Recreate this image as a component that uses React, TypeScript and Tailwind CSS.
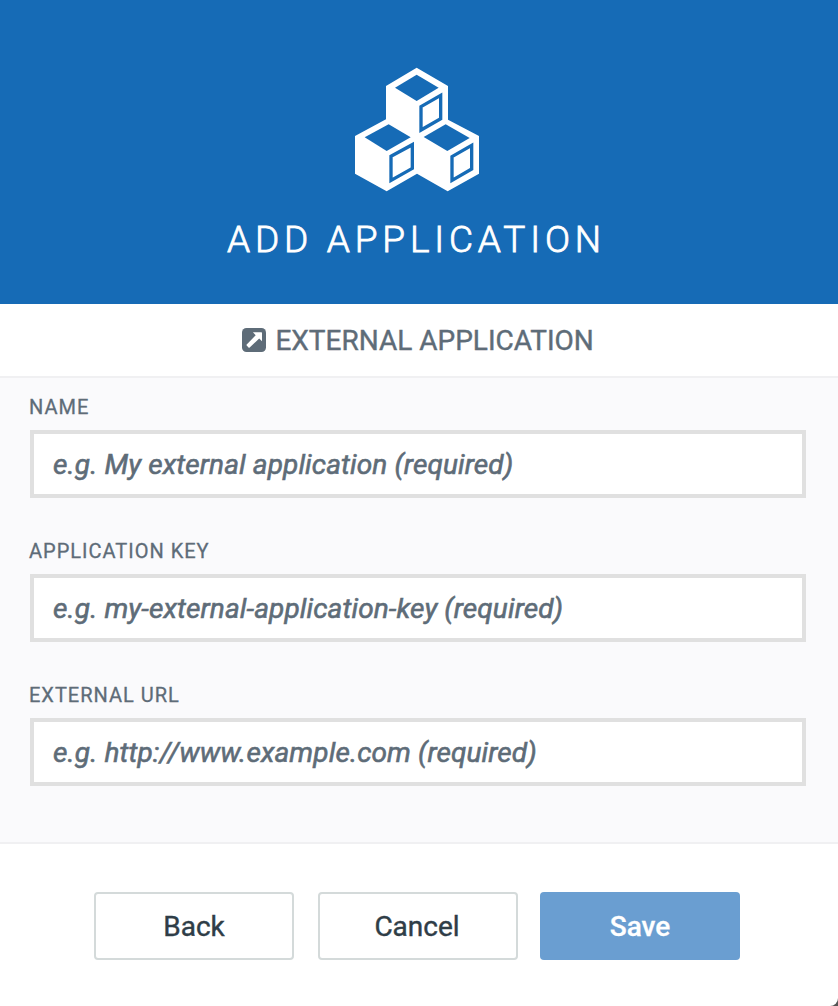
const fields = [
  { id: 'name', label: 'NAME', hint: 'e.g. My external application (required)' },
  { id: 'key', label: 'APPLICATION KEY', hint: 'e.g. my-external-application-key (required)' },
  { id: 'url', label: 'EXTERNAL URL', hint: 'e.g. http://www.example.com (required)' },
];

function CubesIcon() {
  return (
    <svg className="h-[150px] w-[150px] shrink-0" viewBox="0 0 450 450" aria-hidden="true">
      <path
        fill="#fff"
        d="M230 38L324 93V194L417 243V356L323 409L231 356L140 409L45 356V243L138 193V93Z"
      />
      <g fill="#166bb6">
        <path d="M230 59L296 98L230 138L165 98Z" />
        <path d="M146 208L212 247L140 288L74 247Z" />
        <path d="M317 208L389 249L322 288L251 246Z" />
      </g>
      <g fill="none" stroke="#166bb6" strokeWidth="10">
        <path d="M243 155L302 121V191L243 225Z" />
        <path d="M153 304L217 269V340L153 376Z" />
        <path d="M336 305L395 271V342L336 376Z" />
      </g>
    </svg>
  );
}

function ExternalIcon() {
  return (
    <svg className="h-6 w-6 shrink-0" viewBox="0 0 24 24" aria-hidden="true">
      <rect width="24" height="24" rx="4.500" fill="#5e6c78" />
      <path
        fill="#fff"
        d="M10.900 4.200H19.400Q20 4.200 20 4.900V13.300L17.200 10.600L7.700 19.400Q7.100 20 6.500 19.400L4.700 17.600Q4.200 17 4.700 16.400L13.700 7.300Z"
      />
    </svg>
  );
}

export default function App() {
  return (
    <div className="bg-[#555]">
      <main className="flex h-[1006px] w-[838px] flex-col overflow-hidden rounded-br-[8px] bg-white font-['Roboto',sans-serif] text-[#5e6c78]">
        <header className="flex h-[304px] shrink-0 flex-col items-center bg-[#166bb6] pt-[55px] text-white">
          <div className="flex w-full pl-[340px]">
            <CubesIcon />
          </div>
          <h1 className="mt-[12px] w-full whitespace-nowrap pl-[227px] text-[37px] leading-[46px] font-light tracking-[4.8px] [-webkit-text-stroke:0.8px_currentColor]">
            ADD APPLICATION
          </h1>
        </header>
        <div className="flex h-[74px] shrink-0 items-center border-b-2 border-[#f0f0f2] pl-[242.4px]">
          <ExternalIcon />
          <h2 className="ml-[9px] whitespace-nowrap pt-[2px] text-[28px] leading-8 [-webkit-text-stroke:0.4px_currentColor]">
            EXTERNAL APPLICATION
          </h2>
        </div>
        <form className="flex h-[466px] shrink-0 flex-col gap-[22px] border-b-2 border-[#f0f0f2] bg-[#fafafc] pr-8 pl-[30px] pt-[14px]">
          {fields.map((field) => (
            <div key={field.id} className="flex h-[122px] flex-col">
              <label
                htmlFor={field.id}
                className="-ml-px h-[38px] text-[20px] leading-[30px] tracking-[1px] [-webkit-text-stroke:0.3px_currentColor]"
              >
                {field.label}
              </label>
              <input
                id={field.id}
                placeholder={field.hint}
                className="h-[68px] w-full border-4 border-[#e0e0e0] bg-white px-[19px] text-[28px] tracking-[0.11px] outline-none [-webkit-text-stroke:0.6px_#5e6c78] placeholder:text-[#5e6c78] placeholder:italic placeholder:opacity-100"
              />
            </div>
          ))}
        </form>
        <footer className="flex pt-12 pl-[94px] text-[28px] text-[#2f3d47]">
          <button className="h-[68px] w-[200px] rounded-[4px] border-2 border-[#d4dada] bg-white pt-[2px] [-webkit-text-stroke:0.4px_currentColor]">
            Back
          </button>
          <button className="ml-6 h-[68px] w-[200px] rounded-[4px] border-2 border-[#d4dada] bg-white pt-[2px] pr-[2px] [-webkit-text-stroke:0.4px_currentColor]">
            Cancel
          </button>
          <button className="ml-[22px] h-[68px] w-[200px] rounded-[4px] bg-[#6a9ed1] pt-[2px] font-medium text-white [-webkit-text-stroke:0.3px_currentColor]">
            Save
          </button>
        </footer>
      </main>
    </div>
  );
}
